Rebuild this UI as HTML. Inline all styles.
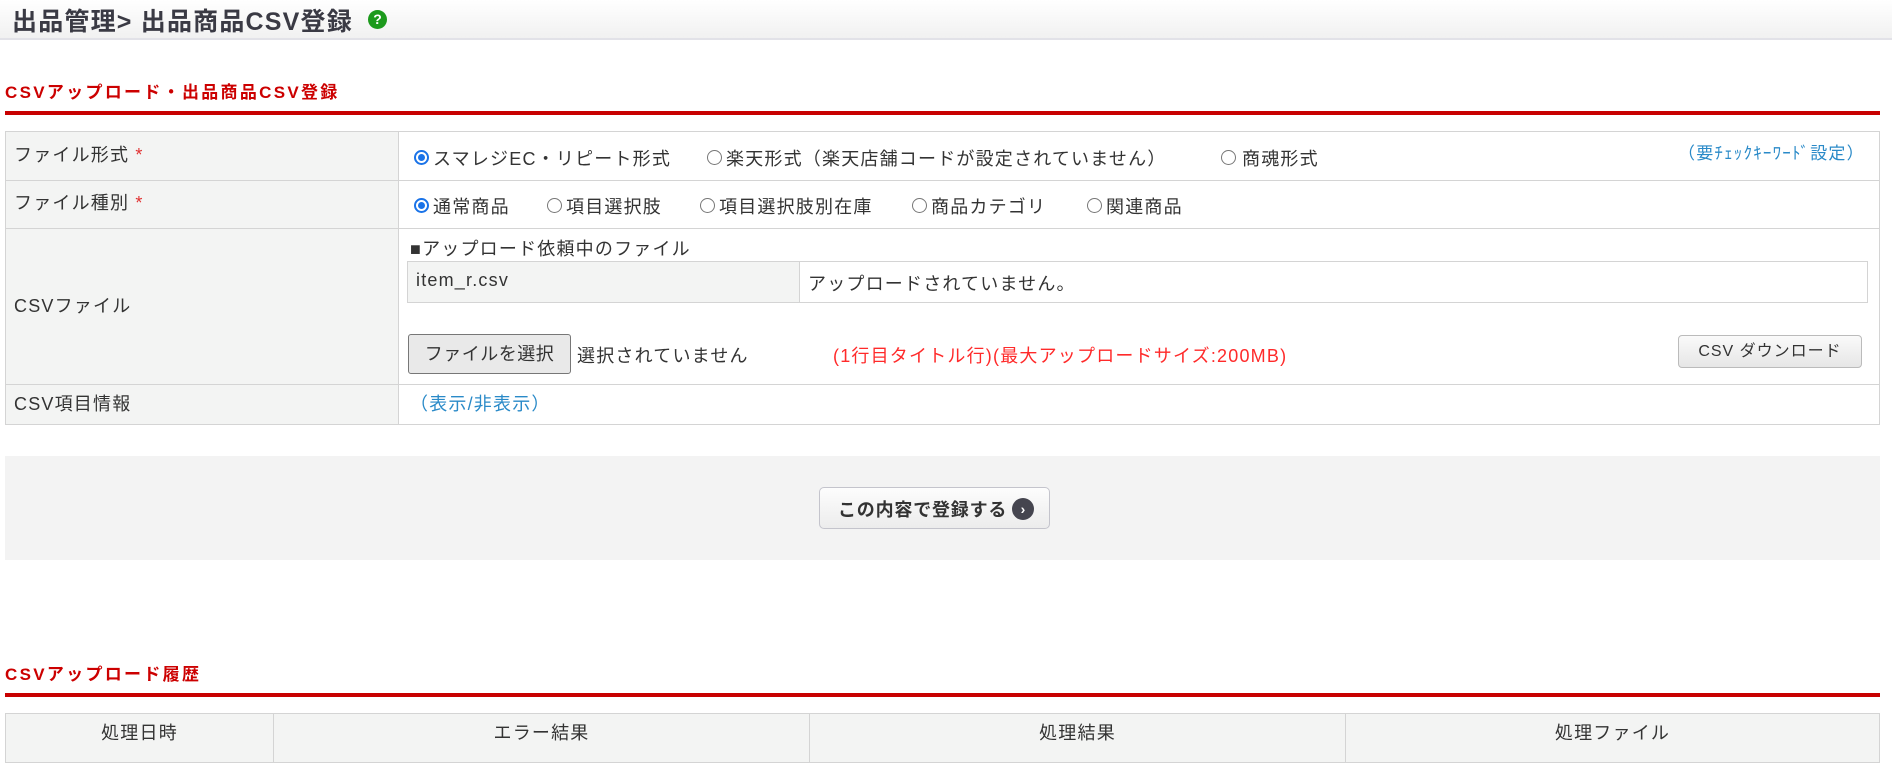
<!DOCTYPE html>
<html><head><meta charset="utf-8"><style>
*{box-sizing:border-box;margin:0;padding:0}
body{width:1892px;height:759px;overflow:hidden;background:#fff;font-family:"Liberation Sans","Noto Sans CJK JP",sans-serif;color:#333;font-size:18px;letter-spacing:1.2px;position:relative}
.a{position:absolute;white-space:nowrap}
.hdr{left:0;top:0;width:1892px;height:40px;background:linear-gradient(#fff,#f1f1f1);border-bottom:2px solid #e2e2e8}
.h2{color:#c00;font-weight:bold;font-size:17px;letter-spacing:2.3px}
.rl{height:4px;background:#c80000;left:5px;width:1875px}
.cell{position:absolute;border:1px solid #d4d4d4}
.lb{background:#f3f4f3}
.rad{position:absolute;width:15px;height:15px;border-radius:50%;border:1px solid #777;background:#fff}
.rad.on{border:2px solid #1a73e8}
.rad.on::after{content:"";position:absolute;left:2px;top:2px;width:7px;height:7px;border-radius:50%;background:#1a73e8}
.lnk{color:#2a8ac8}
.btn{position:absolute;border:1px solid #aaa;border-radius:4px;background:linear-gradient(#fafafa,#e6e6e6);text-align:center}
</style></head><body>
<div class="a hdr"></div>
<div class="a" style="left:12px;top:2px;font-size:25px;font-weight:bold;color:#3a3a44;letter-spacing:1.2px">出品管理&gt; 出品商品CSV登録</div>
<div class="a" style="left:368px;top:10px;width:19px;height:19px;border-radius:50%;background:#1c9a1c;color:#fff;font-size:14px;font-weight:bold;text-align:center;line-height:19px;letter-spacing:0">?</div>

<div class="a h2" style="left:5px;top:78px">CSVアップロード・出品商品CSV登録</div>
<div class="a rl" style="top:111px"></div>

<div class="cell lb" style="left:5px;top:131px;width:394px;height:50px"></div>
<div class="cell" style="left:398px;top:131px;width:1482px;height:50px"></div>
<div class="cell lb" style="left:5px;top:180px;width:394px;height:49px"></div>
<div class="cell" style="left:398px;top:180px;width:1482px;height:49px"></div>
<div class="cell lb" style="left:5px;top:228px;width:394px;height:157px"></div>
<div class="cell" style="left:398px;top:228px;width:1482px;height:157px"></div>
<div class="cell lb" style="left:5px;top:384px;width:394px;height:41px"></div>
<div class="cell" style="left:398px;top:384px;width:1482px;height:41px"></div>

<div class="a" style="left:14px;top:141px">ファイル形式 <span style="color:#e03030">*</span></div>
<div class="a" style="left:14px;top:189px">ファイル種別 <span style="color:#e03030">*</span></div>
<div class="a" style="left:14px;top:292px">CSVファイル</div>
<div class="a" style="left:14px;top:390px">CSV項目情報</div>

<div class="rad on" style="left:414px;top:150px"></div><div class="a" style="left:433px;top:145px">スマレジEC・リピート形式</div>
<div class="rad" style="left:707px;top:150px"></div><div class="a" style="left:726px;top:145px">楽天形式（楽天店舗コードが設定されていません）</div>
<div class="rad" style="left:1221px;top:150px"></div><div class="a" style="left:1242px;top:145px">商魂形式</div>
<div class="a lnk" style="left:1678px;top:139px;font-size:17px">（要ﾁｪｯｸｷｰﾜｰﾄﾞ設定）</div>

<div class="rad on" style="left:414px;top:198px"></div><div class="a" style="left:433px;top:193px">通常商品</div>
<div class="rad" style="left:547px;top:198px"></div><div class="a" style="left:566px;top:193px">項目選択肢</div>
<div class="rad" style="left:700px;top:198px"></div><div class="a" style="left:719px;top:193px">項目選択肢別在庫</div>
<div class="rad" style="left:912px;top:198px"></div><div class="a" style="left:931px;top:193px">商品カテゴリ</div>
<div class="rad" style="left:1087px;top:198px"></div><div class="a" style="left:1106px;top:193px">関連商品</div>

<div class="a" style="left:410px;top:235px">■アップロード依頼中のファイル</div>
<div class="cell lb" style="left:407px;top:261px;width:393px;height:42px"></div>
<div class="cell" style="left:799px;top:261px;width:1069px;height:42px"></div>
<div class="a" style="left:416px;top:270px">item_r.csv</div>
<div class="a" style="left:808px;top:270px">アップロードされていません。</div>

<div class="btn" style="left:408px;top:334px;width:163px;height:40px;border-color:#777;background:#e9e9e9;line-height:38px;border-radius:3px;letter-spacing:0.5px">ファイルを選択</div>
<div class="a" style="left:577px;top:342px">選択されていません</div>
<div class="a" style="left:833px;top:342px;color:#ff2a2a">(1行目タイトル行)(最大アップロードサイズ:200MB)</div>
<div class="btn" style="left:1678px;top:335px;width:184px;height:33px;line-height:31px;border-color:#bbb;font-size:16px;letter-spacing:1px">CSV ダウンロード</div>

<div class="a lnk" style="left:410px;top:390px">（表示/非表示）</div>

<div class="a" style="left:5px;top:456px;width:1875px;height:104px;background:#f3f3f3"></div>
<div class="btn" style="left:819px;top:487px;width:231px;height:42px;border-color:#c4c4cc;border-radius:5px;background:linear-gradient(#fdfdfd,#ececec)">
<span class="a" style="left:18px;top:8px;font-weight:bold;color:#333;letter-spacing:0.8px">この内容で登録する</span>
<span class="a" style="left:192px;top:10px;width:22px;height:22px;border-radius:50%;background:#45454f;color:#fff;font-size:14px;font-weight:bold;line-height:22px;text-align:center;letter-spacing:0">›</span>
</div>

<div class="a h2" style="left:5px;top:660px">CSVアップロード履歴</div>
<div class="a rl" style="top:693px"></div>

<div class="cell lb" style="left:5px;top:713px;width:269px;height:50px"></div>
<div class="cell lb" style="left:273px;top:713px;width:537px;height:50px"></div>
<div class="cell lb" style="left:809px;top:713px;width:537px;height:50px"></div>
<div class="cell lb" style="left:1345px;top:713px;width:535px;height:50px"></div>
<div class="a" style="left:5px;width:269px;top:719px;text-align:center">処理日時</div>
<div class="a" style="left:273px;width:537px;top:719px;text-align:center">エラー結果</div>
<div class="a" style="left:809px;width:537px;top:719px;text-align:center">処理結果</div>
<div class="a" style="left:1345px;width:535px;top:719px;text-align:center">処理ファイル</div>
</body></html>
